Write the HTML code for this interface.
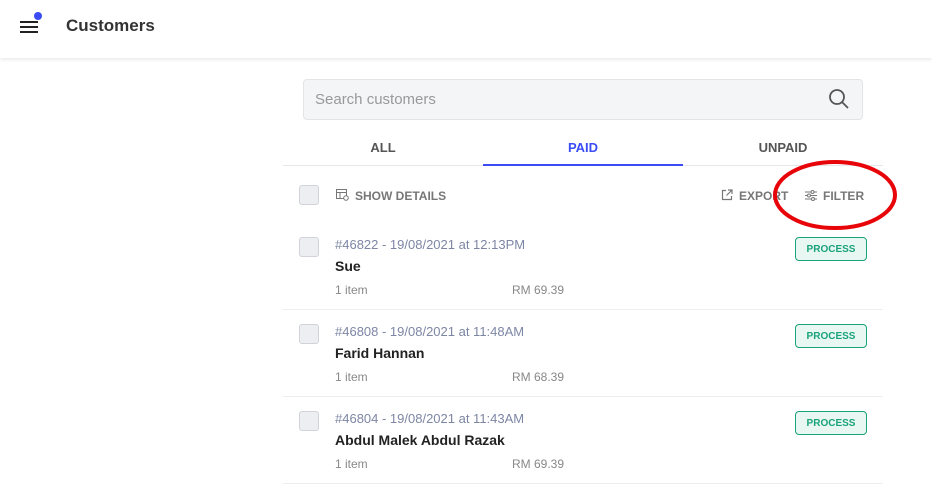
<!DOCTYPE html>
<html><head><style>
body{margin:0;width:932px;height:490px;background:#fff;font-family:"Liberation Sans",sans-serif;position:relative;overflow:hidden}
.a{position:absolute}
.cb{position:absolute;left:299px;width:18px;height:18px;border:1px solid #d0d3d9;background:#eceef2;border-radius:3px}
.meta{color:#7d86a4;font-size:13px}
.name{color:#222;font-size:14px;font-weight:bold}
.sm{color:#888;font-size:12px}
.btn{position:absolute;left:795px;width:70px;height:22px;border:1px solid #1aa37a;background:#e8f7f1;border-radius:4px;color:#1aa37a;font-size:10px;font-weight:bold;text-align:center;line-height:23px}
.sep{position:absolute;left:283px;width:600px;height:1px;background:#eceef0}
</style></head><body>
<div class="a" style="left:0;top:0;width:932px;height:58px;background:#fff;box-shadow:0 2px 3px rgba(0,0,0,0.08)"></div>
<div class="a" style="left:20px;top:21px;width:18px;height:2px;background:#222;box-shadow:0 5px 0 #222,0 10px 0 #222"></div>
<div class="a" style="left:34px;top:12px;width:8px;height:8px;border-radius:50%;background:#3b4cf5"></div>
<div class="a" style="left:66px;top:16px;font-size:17px;font-weight:bold;color:#333">Customers</div>
<div class="a" style="left:303px;top:79px;width:558px;height:39px;border:1px solid #e2e4e8;background:#f4f5f7;border-radius:4px"></div>
<div class="a" style="left:315px;top:91px;font-size:15px;color:#999">Search customers</div>
<svg class="a" style="left:828px;top:88px" width="22" height="22" viewBox="0 0 22 22"><circle cx="9" cy="9" r="7" fill="none" stroke="#555" stroke-width="1.8"/><path d="M14 14l6 6" stroke="#555" stroke-width="1.8"/></svg>
<div class="a" style="left:283px;top:140px;width:200px;text-align:center;font-size:13px;font-weight:bold;color:#555">ALL</div>
<div class="a" style="left:483px;top:140px;width:200px;text-align:center;font-size:13px;font-weight:bold;color:#3b4cf5">PAID</div>
<div class="a" style="left:683px;top:140px;width:200px;text-align:center;font-size:13px;font-weight:bold;color:#555">UNPAID</div>
<div class="a" style="left:283px;top:165px;width:600px;height:1px;background:#e5e7eb"></div>
<div class="a" style="left:483px;top:164px;width:200px;height:2px;background:#3b4cf5"></div>
<div class="cb" style="top:185px"></div>
<svg class="a" style="left:336px;top:189px" width="13" height="12" viewBox="0 0 13 12"><rect x="0.5" y="0.5" width="10" height="9" fill="none" stroke="#777"/><path d="M0.5 3.5h10M4 3.5v6" stroke="#777"/><circle cx="10" cy="9" r="2.3" fill="#fff" stroke="#777"/></svg>
<div class="a" style="left:355px;top:189px;font-size:12px;font-weight:bold;color:#777">SHOW DETAILS</div>
<svg class="a" style="left:721px;top:189px" width="12" height="12" viewBox="0 0 12 12"><path d="M5 1.5H1.5v9h9V7M7 1h4v4M11 1L5.5 6.5" fill="none" stroke="#777" stroke-width="1.2"/></svg>
<div class="a" style="left:739px;top:189px;font-size:12px;font-weight:bold;color:#777">EXPORT</div>
<svg class="a" style="left:805px;top:190px" width="12" height="11" viewBox="0 0 12 11"><path d="M0 2h12M0 5.5h12M0 9h12" stroke="#777"/><circle cx="7.5" cy="2" r="1.5" fill="#fff" stroke="#777"/><circle cx="4" cy="5.5" r="1.5" fill="#fff" stroke="#777"/><circle cx="8" cy="9" r="1.5" fill="#fff" stroke="#777"/></svg>
<div class="a" style="left:823px;top:189px;font-size:12px;font-weight:bold;color:#777">FILTER</div>

<div class="cb" style="top:237px"></div>
<div class="a meta" style="left:335px;top:237px">#46822 - 19/08/2021 at 12:13PM</div>
<div class="a name" style="left:335px;top:258px">Sue</div>
<div class="a sm" style="left:335px;top:283px">1 item</div><div class="a sm" style="left:512px;top:283px">RM 69.39</div>
<div class="btn" style="top:237px">PROCESS</div>
<div class="sep" style="top:309px"></div>

<div class="cb" style="top:324px"></div>
<div class="a meta" style="left:335px;top:324px">#46808 - 19/08/2021 at 11:48AM</div>
<div class="a name" style="left:335px;top:345px">Farid Hannan</div>
<div class="a sm" style="left:335px;top:370px">1 item</div><div class="a sm" style="left:512px;top:370px">RM 68.39</div>
<div class="btn" style="top:324px">PROCESS</div>
<div class="sep" style="top:396px"></div>

<div class="cb" style="top:411px"></div>
<div class="a meta" style="left:335px;top:411px">#46804 - 19/08/2021 at 11:43AM</div>
<div class="a name" style="left:335px;top:432px">Abdul Malek Abdul Razak</div>
<div class="a sm" style="left:335px;top:457px">1 item</div><div class="a sm" style="left:512px;top:457px">RM 69.39</div>
<div class="btn" style="top:411px">PROCESS</div>
<div class="sep" style="top:483px"></div>

<svg class="a" style="left:770px;top:158px" width="130" height="74"><ellipse cx="65" cy="37" rx="60" ry="33" fill="none" stroke="#e8050a" stroke-width="4"/></svg>
</body></html>
